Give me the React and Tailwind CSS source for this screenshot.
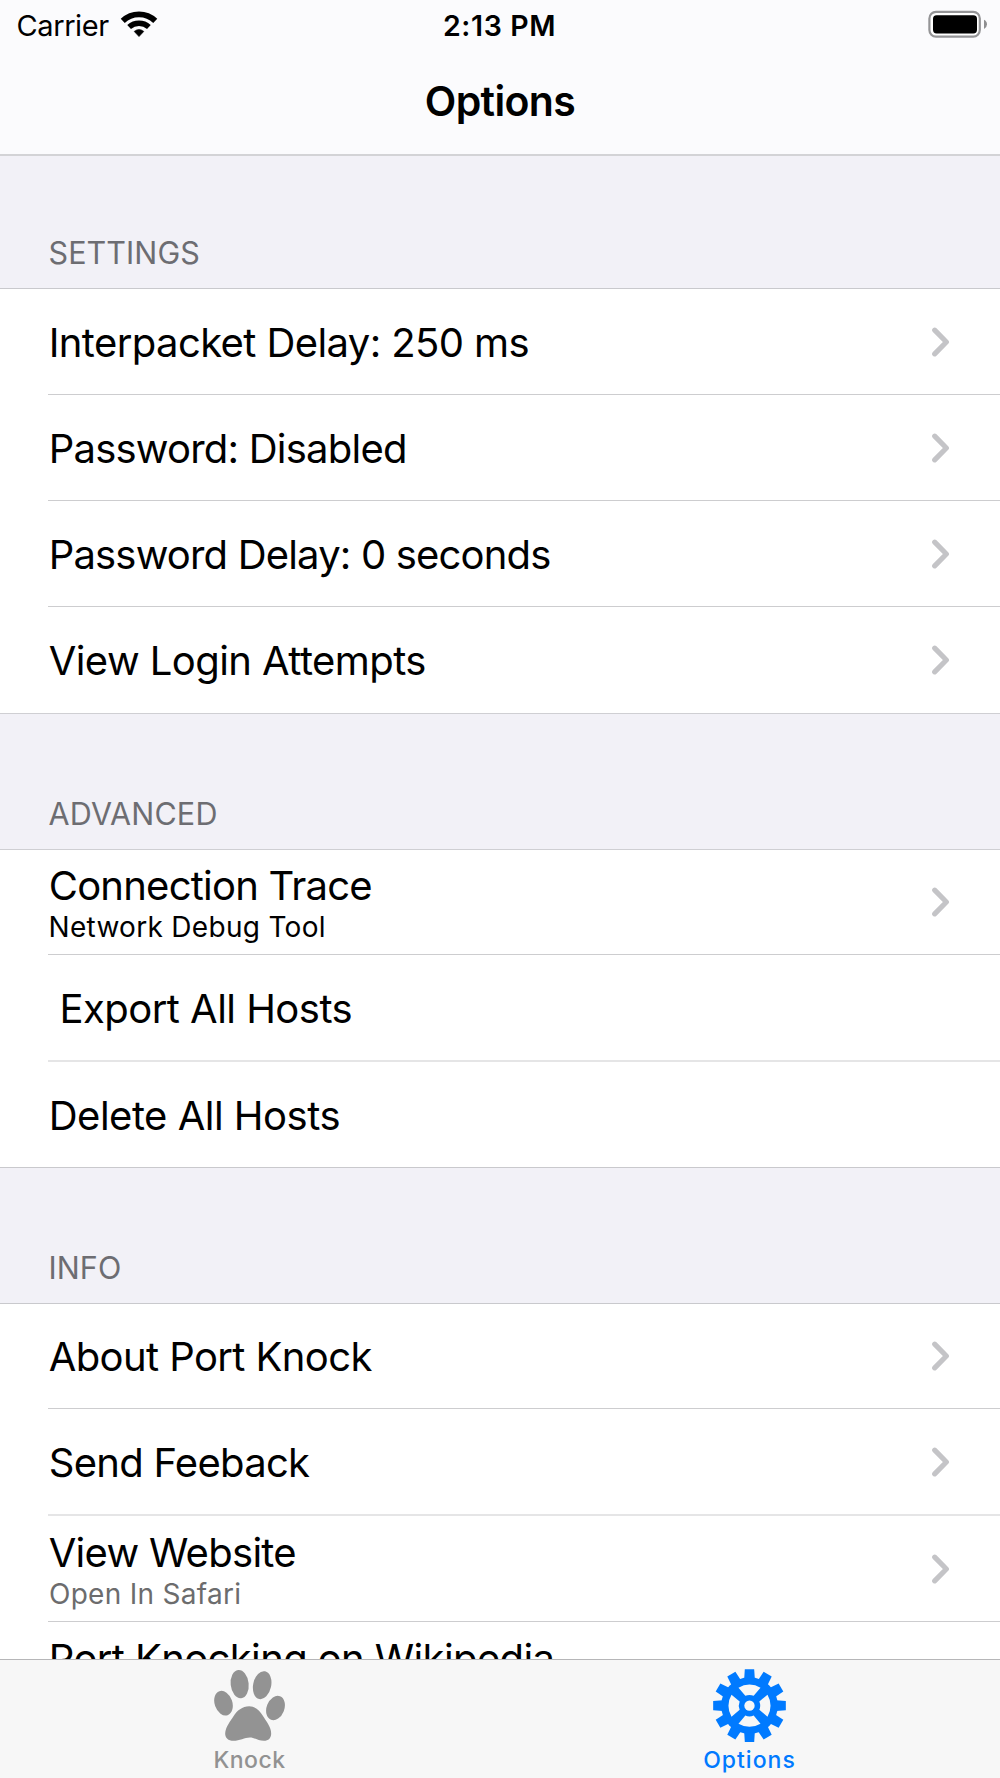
import React from "react";

function WifiIcon() {
  return (
    <svg className="h-7 w-[38px]" viewBox="0 0 38 28" fill="none" stroke="black">
      <path d="M2.75 10.9A23.6 23.6 0 0 1 35.25 10.9" strokeWidth="5.8" />
      <path d="M9.1 17A14.9 14.9 0 0 1 28.9 17" strokeWidth="5.6" />
      <path d="M19 26.6L14.2 21.4Q19 17.6 23.8 21.4Z" fill="black" strokeWidth="0.6" strokeLinejoin="round" />
    </svg>
  );
}

function BatteryIcon() {
  return (
    <svg className="h-7 w-[60px]" viewBox="0 0 60 28">
      <rect x="1.4" y="1.9" width="50.4" height="24.8" rx="6.6" fill="white" stroke="#949496" strokeWidth="2.2" />
      <rect x="5" y="5.2" width="44" height="18.2" rx="3.6" fill="black" />
      <path d="M56 9.8Q59 11.3 59 14.3T56 18.9Z" fill="#8e8e90" />
    </svg>
  );
}

function Chevron() {
  return (
    <svg className="mr-[50px] h-[30px] w-5 shrink-0" viewBox="0 0 20 30" fill="none">
      <path d="M4.7 3.1L16.4 15L4.7 26.9" stroke="#c4c4c7" strokeWidth="5.1" strokeLinecap="round" strokeLinejoin="round" />
    </svg>
  );
}

function PawIcon() {
  return (
    <svg className="h-[74px] w-[74px]" viewBox="99.5 86.5 222 222" fill="#939393">
      <ellipse cx="131" cy="189" rx="26.5" ry="38" transform="rotate(-19 131 189)" />
      <ellipse cx="179.5" cy="132" rx="27" ry="42.5" transform="rotate(-6 179.5 132)" />
      <ellipse cx="247" cy="135" rx="27" ry="42.5" transform="rotate(12 247 135)" />
      <ellipse cx="287" cy="203.5" rx="26.5" ry="38" transform="rotate(21 287 203.5)" />
      <path d="M208 198C226 198 240 211 249 227C259 244 274 260 274 280C274 294 266 302 252 302C236 302 224 292 210 292C195 292 179 302 161 302C145 302 136 293 136 280C137 260 151 244 161 228C171 211 188 198 208 198Z" />
    </svg>
  );
}

const teeth = [0, 30, 60, 90, 120, 150, 180, 210, 240, 270, 300, 330];

function GearIcon() {
  return (
    <svg className="h-[74px] w-[74px]" viewBox="-109.5 -110 222 222">
      <circle r="85" fill="#007aff" />
      {teeth.map((a) => (
        <path key={a} d="M-16 -80L-14 -109H14L16 -80Z" transform={`rotate(${a})`} fill="#007aff" />
      ))}
      {[0, 90, 180, 270].map((a) => (
        <path key={a} d="M-33 -54A64 64 0 0 1 33 -54L12.500 -29.500A32 32 0 0 0 -12.500 -29.500Z" transform={`rotate(${a})`} fill="#f7f7f7" />
      ))}
      <circle r="15.5" fill="#f7f7f7" />
    </svg>
  );
}

function Row({ title, sub, subClass = "text-black", tracking, height = "h-[106px]", pad = "pt-[30px]", line = "border-b border-[#cdcdcf]", chevron = true }) {
  return (
    <div className={`flex shrink-0 bg-white pl-12 ${height}`}>
      <div className={`flex min-w-0 flex-1 items-center justify-between ${line}`}>
        <div className={`h-full ${pad}`}>
          <div className={`pl-[0.7px] text-[40px] leading-[48px] whitespace-pre ${tracking}`}>{title}</div>
          {sub && <div className={`text-[28px] leading-[34px] whitespace-pre ${subClass}`}>{sub}</div>}
        </div>
        {chevron && <Chevron />}
      </div>
    </div>
  );
}

function SectionHeader({ children, className }) {
  return (
    <div className={`flex shrink-0 items-end pl-[48.5px] text-[30.5px] leading-9 text-[#6d6d72] ${className}`}>
      {children}
    </div>
  );
}

export default function App() {
  return (
    <div className="flex h-[1778px] w-[1000px] flex-col overflow-hidden bg-[#f2f1f7] font-['Inter',sans-serif] text-black">
      <header className="h-[156px] shrink-0 border-b-2 border-[#d3d3d6] bg-[#fbfbfd]">
        <div className="grid h-[51px] grid-cols-3 pt-[10px]">
          <div className="flex pl-[16.5px]">
            <span className="w-[103px] text-[29px] leading-[31px] tracking-[-0.4px]">Carrier</span>
            <WifiIcon />
          </div>
          <div className="pr-px text-center text-[28.5px] leading-[31px] font-semibold tracking-[0.6px]">2:13 PM</div>
          <div className="flex justify-end pr-3">
            <BatteryIcon />
          </div>
        </div>
        <h1 className="pt-[25px] text-center text-[41px] leading-[50px] font-semibold tracking-[-0.64px]">Options</h1>
      </header>

      <main className="flex min-h-0 flex-1 flex-col overflow-hidden">
        <SectionHeader className="h-[133px] border-b border-[#c9c9cd] pb-[17px] tracking-[0.08px]">SETTINGS</SectionHeader>
        <Row title="Interpacket Delay: 250 ms" tracking="tracking-[-0.6px]" />
        <Row title="Password: Disabled" tracking="tracking-[-0.78px]" />
        <Row title="Password Delay: 0 seconds" tracking="tracking-[-0.82px]" />
        <Row title="View Login Attempts" tracking="tracking-[-0.56px]" line="" />

        <SectionHeader className="h-[137px] border-y border-[#cfcfd3] pb-[17px] tracking-[0.18px]">ADVANCED</SectionHeader>
        <Row title="Connection Trace" sub="Network Debug Tool" subClass="pl-[0.5px] text-black tracking-[0.3px]" tracking="tracking-[-0.77px]" height="h-[105px]" pad="pt-3" />
        <Row title=" Export All Hosts" tracking="tracking-[-0.53px]" height="h-[107px]" line="border-b-2 border-[#e5e5e6]" chevron={false} />
        <Row title="Delete All Hosts" tracking="tracking-[-0.5px]" height="h-[105px]" line="" chevron={false} />

        <SectionHeader className="h-[137px] border-y border-[#c9c9cd] pb-[17px] tracking-[0.08px]">INFO</SectionHeader>
        <Row title="About Port Knock" tracking="tracking-[-0.6px]" height="h-[105px]" pad="pt-[29px]" />
        <Row title="Send Feeback" tracking="tracking-[-0.71px]" height="h-[107px]" line="border-b-2 border-[#e5e5e6]" />
        <Row title="View Website" sub="Open In Safari" subClass="pl-px text-[#6c6c6d] tracking-[0.28px]" tracking="tracking-[-0.72px]" pad="pt-[13px]" />
        <Row title="Port Knocking on Wikipedia" tracking="tracking-[-0.62px]" pad="pt-[13px]" chevron={false} />
      </main>

      <nav className="grid h-[119px] shrink-0 grid-cols-2 border-t border-[#b6b6b8] bg-[#f7f7f7] text-[23px] leading-7 font-medium">
        <div className="flex flex-col items-center pt-[8.7px] text-[#929292]">
          <PawIcon />
          <span className="mt-[3px] pr-px tracking-[0.5px]">Knock</span>
        </div>
        <div className="flex flex-col items-center pt-[8.7px] text-[#007aff]">
          <GearIcon />
          <span className="mt-[3px] pr-px tracking-[1.02px]">Options</span>
        </div>
      </nav>
    </div>
  );
}
